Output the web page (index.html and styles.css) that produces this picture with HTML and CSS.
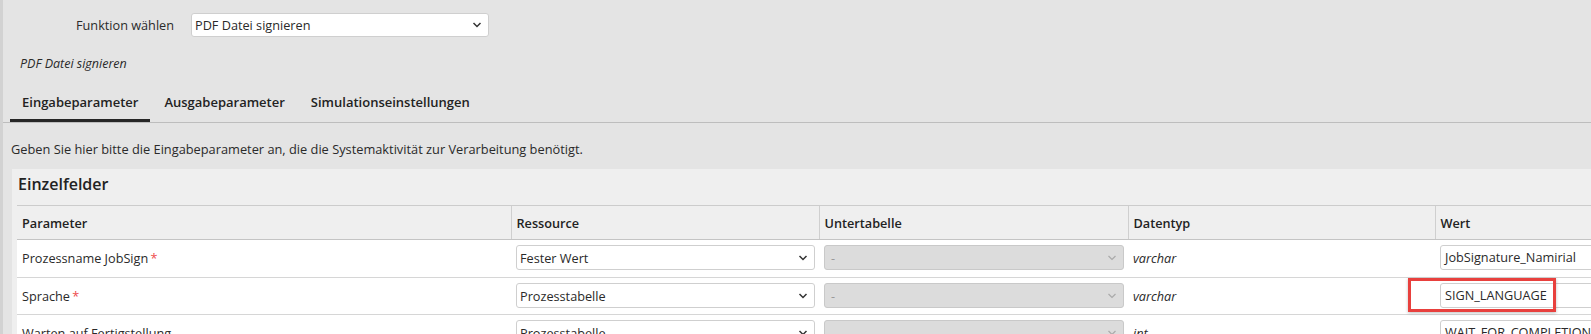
FILE: index.html
```html
<!DOCTYPE html>
<html lang="de">
<head>
<meta charset="utf-8">
<title>Systemaktivität</title>
<link rel="stylesheet" href="styles.css">
</head>
<body>
<div class="page">
  <div class="func-row">
    <label class="func-label">Funktion wählen</label>
    <div class="select func-select">
      <span class="select-text">PDF Datei signieren</span>
      <svg class="chev" width="10" height="6" viewBox="0 0 10 6"><path d="M1.5 1 L5 4.5 L8.5 1" fill="none" stroke="#333" stroke-width="1.5"/></svg>
    </div>
  </div>
  <div class="func-title">PDF Datei signieren</div>
  <div class="tabs">
    <div class="tab active">Eingabeparameter</div>
    <div class="tab">Ausgabeparameter</div>
    <div class="tab">Simulationseinstellungen</div>
  </div>
  <p class="desc">Geben Sie hier bitte die Eingabeparameter an, die die Systemaktivität zur Verarbeitung benötigt.</p>
  <section class="panel">
    <h2 class="panel-title">Einzelfelder</h2>
    <table class="grid">
      <colgroup>
        <col class="c-param"><col class="c-res"><col class="c-sub"><col class="c-type"><col class="c-val">
      </colgroup>
      <thead>
        <tr><th>Parameter</th><th>Ressource</th><th>Untertabelle</th><th>Datentyp</th><th>Wert</th></tr>
      </thead>
      <tbody>
        <tr>
          <td>Prozessname JobSign <span class="req">*</span></td>
          <td class="ctl"><div class="select"><span class="select-text">Fester Wert</span><svg class="chev" width="10" height="6" viewBox="0 0 10 6"><path d="M1.5 1 L5 4.5 L8.5 1" fill="none" stroke="#333" stroke-width="1.5"/></svg></div></td>
          <td class="ctl"><div class="select disabled"><span class="select-text">-</span><svg class="chev" width="10" height="6" viewBox="0 0 10 6"><path d="M1.5 1 L5 4.5 L8.5 1" fill="none" stroke="#aaa" stroke-width="1.2"/></svg></div></td>
          <td class="type">varchar</td>
          <td class="ctl"><div class="input">JobSignature_Namirial</div></td>
        </tr>
        <tr>
          <td>Sprache <span class="req">*</span></td>
          <td class="ctl"><div class="select"><span class="select-text">Prozesstabelle</span><svg class="chev" width="10" height="6" viewBox="0 0 10 6"><path d="M1.5 1 L5 4.5 L8.5 1" fill="none" stroke="#333" stroke-width="1.5"/></svg></div></td>
          <td class="ctl"><div class="select disabled"><span class="select-text">-</span><svg class="chev" width="10" height="6" viewBox="0 0 10 6"><path d="M1.5 1 L5 4.5 L8.5 1" fill="none" stroke="#aaa" stroke-width="1.2"/></svg></div></td>
          <td class="type">varchar</td>
          <td class="ctl"><div class="wert-wrap"><div class="input">SIGN_LANGUAGE</div><div class="highlight"></div></div></td>
        </tr>
        <tr>
          <td>Warten auf Fertigstellung</td>
          <td class="ctl"><div class="select"><span class="select-text">Prozesstabelle</span><svg class="chev" width="10" height="6" viewBox="0 0 10 6"><path d="M1.5 1 L5 4.5 L8.5 1" fill="none" stroke="#333" stroke-width="1.5"/></svg></div></td>
          <td class="ctl"><div class="select disabled"><span class="select-text">-</span><svg class="chev" width="10" height="6" viewBox="0 0 10 6"><path d="M1.5 1 L5 4.5 L8.5 1" fill="none" stroke="#aaa" stroke-width="1.2"/></svg></div></td>
          <td class="type">int</td>
          <td class="ctl"><div class="input">WAIT_FOR_COMPLETION</div></td>
        </tr>
      </tbody>
    </table>
  </section>
</div>
</body>
</html>
```
FILE: styles.css
```css
html, body {
  margin: 0;
  padding: 0;
  overflow: hidden;
  background: #e4e4e4;
}
body {
  font-family: "Open Sans", "Liberation Sans", sans-serif;
  font-size: 12.7px;
  line-height: 18px;
  color: #2a2a2a;
}
.page {
  border-left: 3px solid #d2d2d2;
  padding-left: 7px;
  min-height: 334px;
  box-sizing: border-box;
}
.func-row {
  display: flex;
  align-items: center;
  padding-top: 13px;
}
.func-label {
  width: 164px;
  text-align: right;
  margin-right: 17px;
}
.select {
  position: relative;
  display: flex;
  align-items: center;
  height: 25px;
  box-sizing: border-box;
  background: #fff;
  border: 1px solid #cfcfcf;
  border-radius: 3px;
  padding: 0 26px 0 3px;
  white-space: nowrap;
  overflow: hidden;
}
.select .chev {
  position: absolute;
  right: 6px;
  top: 9px;
}
.func-select {
  width: 298px;
  height: 24px;
}
.func-select .chev { top: 8px; right: 6px; }
.func-title {
  font-style: italic;
  font-size: 12.5px;
  margin-top: 18px;
  padding-left: 10px;
}
.tabs {
  display: flex;
  gap: 2px;
  margin-top: 11px;
  border-bottom: 1px solid #bdbdbd;
  margin-left: -7px;
  padding-left: 7px;
}
.tab {
  font-size: 13px;
  font-weight: 600;
  padding: 9px 12px 8px;
  border-bottom: 3px solid transparent;
  color: #222;
}
.tab.active {
  border-bottom-color: #262626;
}
.desc {
  font-size: 12.8px;
  margin: 17px 0 11px 1px;
}
.panel {
  margin-left: 2px;
  background: #efefef;
  padding: 4px 0 0 5px;
}
.panel-title {
  margin: 0 0 9px 1px;
  font-size: 16px;
  line-height: 23px;
  font-weight: 600;
  color: #222;
}
.grid {
  border-collapse: collapse;
  table-layout: fixed;
  width: 1740px;
}
.c-param { width: 494px; }
.c-res { width: 308px; }
.c-sub { width: 309px; }
.c-type { width: 307px; }
.c-val { width: 322px; }
.grid th {
  text-align: left;
  font-weight: 600;
  color: #222;
  height: 33px;
  padding: 0 5px;
  border-top: 1px solid #cccccc;
  border-bottom: 1px solid #c4c4c4;
  background: #efefef;
}
.grid th + th {
  border-left: 1px solid #cfcfcf;
}
.grid td {
  background: #fff;
  border-bottom: 1px solid #d6d6d6;
  padding: 5px 5px 6px;
  height: 25px;
  vertical-align: middle;
  white-space: nowrap;
}
.grid tbody tr:first-child td {
  padding-bottom: 7px;
}
.grid td.ctl {
  padding-right: 4px;
}
.grid td.type {
  font-style: italic;
}
.req {
  color: #ee4b4b;
  margin-left: -1px;
}
.select.disabled {
  background: #dcdcdc;
  border-color: #c9c9c9;
  color: #9a9a9a;
  padding-left: 6px;
}
.input {
  height: 25px;
  box-sizing: border-box;
  background: #fff;
  border: 1px solid #cfcfcf;
  border-radius: 3px;
  padding: 0 4px;
  line-height: 23px;
  white-space: nowrap;
  overflow: hidden;
}
.wert-wrap {
  position: relative;
}
.highlight {
  position: absolute;
  left: -32px;
  top: -5px;
  width: 148px;
  height: 34px;
  box-sizing: border-box;
  border: 3px solid #e8403d;
  box-shadow: 0 1px 3px rgba(0, 0, 0, 0.25);
}
```
